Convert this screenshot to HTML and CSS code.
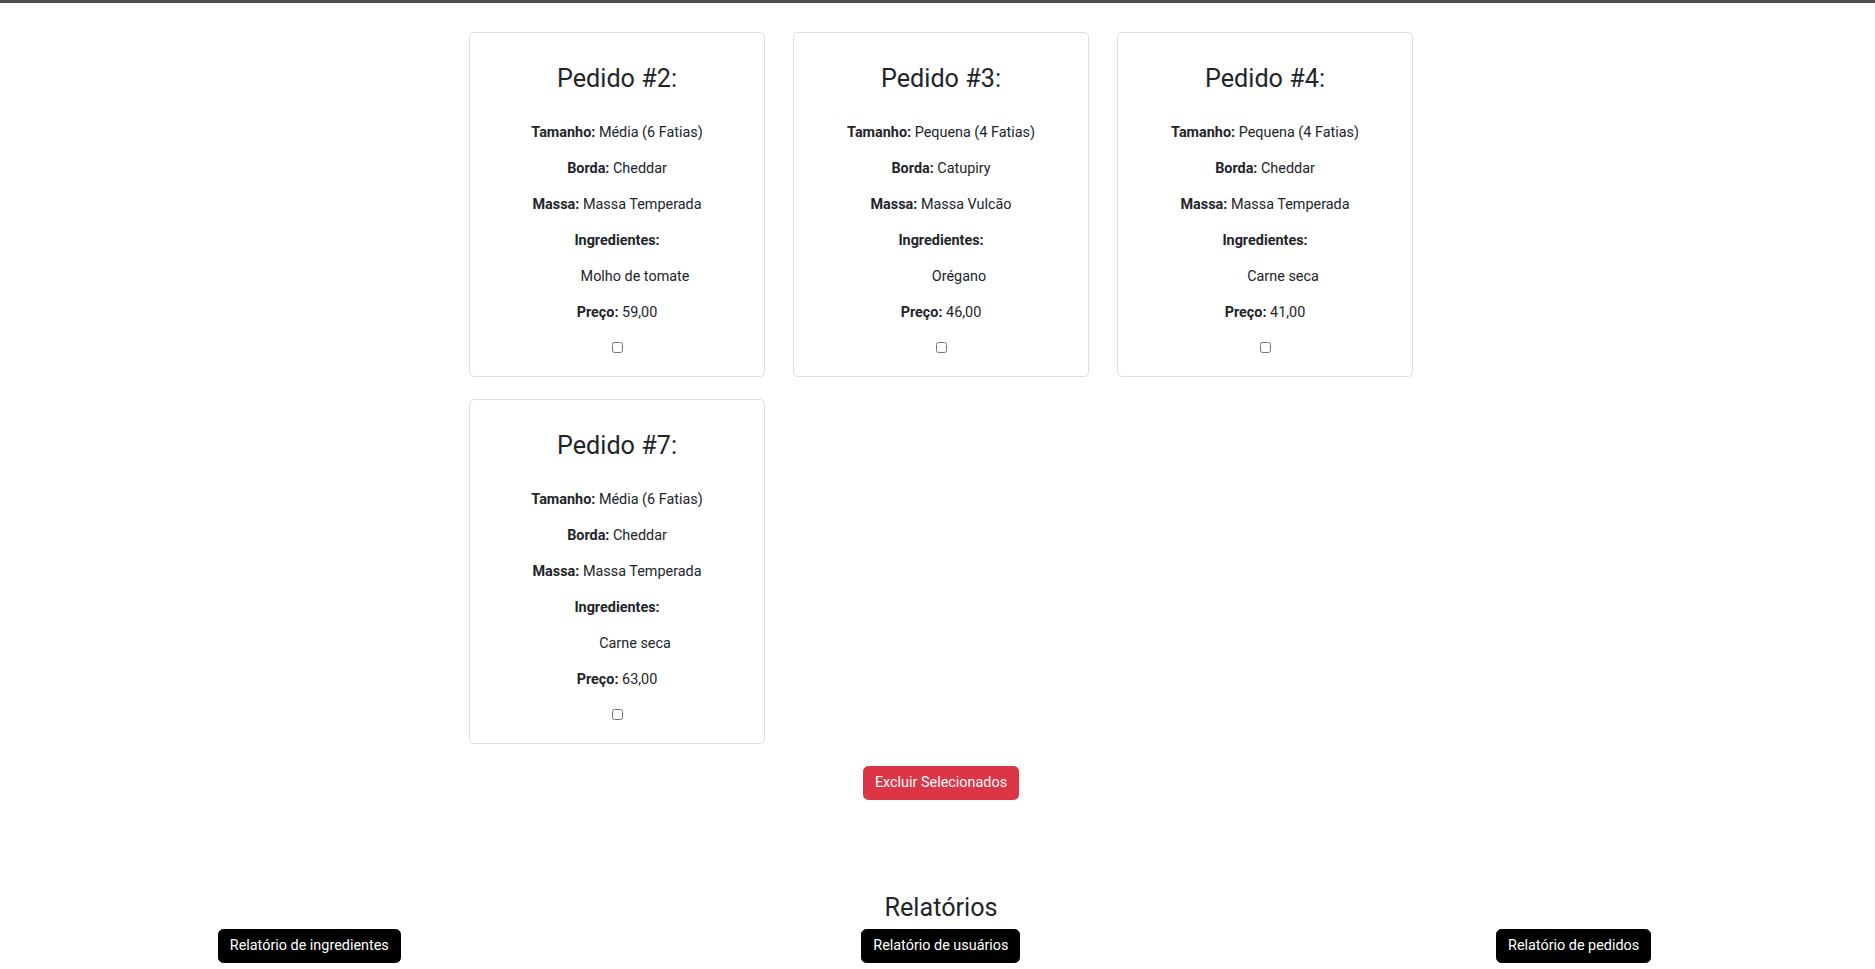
FILE: index.html
```html
<!DOCTYPE html>
<html lang="pt-BR">
<head>
<meta charset="utf-8">
<title>Pedidos</title>
<link rel="stylesheet" href="styles.css">
</head>
<body>
<div class="topbar"></div>
<main class="page">
  <form class="orders">
    <div class="grid">
      <div class="card">
        <h3 class="card-title">Pedido #2:</h3>
        <p><strong>Tamanho:</strong> Média (6 Fatias)</p>
        <p><strong>Borda:</strong> Cheddar</p>
        <p><strong>Massa:</strong> Massa Temperada</p>
        <p><strong>Ingredientes:</strong></p>
        <ul class="ingredients"><li>Molho de tomate</li></ul>
        <p><strong>Preço:</strong> 59,00</p>
        <div class="check"><input type="checkbox" name="pedido" value="2"></div>
      </div>
      <div class="card">
        <h3 class="card-title">Pedido #3:</h3>
        <p><strong>Tamanho:</strong> Pequena (4 Fatias)</p>
        <p><strong>Borda:</strong> Catupiry</p>
        <p><strong>Massa:</strong> Massa Vulcão</p>
        <p><strong>Ingredientes:</strong></p>
        <ul class="ingredients"><li>Orégano</li></ul>
        <p><strong>Preço:</strong> 46,00</p>
        <div class="check"><input type="checkbox" name="pedido" value="3"></div>
      </div>
      <div class="card">
        <h3 class="card-title">Pedido #4:</h3>
        <p><strong>Tamanho:</strong> Pequena (4 Fatias)</p>
        <p><strong>Borda:</strong> Cheddar</p>
        <p><strong>Massa:</strong> Massa Temperada</p>
        <p><strong>Ingredientes:</strong></p>
        <ul class="ingredients"><li>Carne seca</li></ul>
        <p><strong>Preço:</strong> 41,00</p>
        <div class="check"><input type="checkbox" name="pedido" value="4"></div>
      </div>
      <div class="card">
        <h3 class="card-title">Pedido #7:</h3>
        <p><strong>Tamanho:</strong> Média (6 Fatias)</p>
        <p><strong>Borda:</strong> Cheddar</p>
        <p><strong>Massa:</strong> Massa Temperada</p>
        <p><strong>Ingredientes:</strong></p>
        <ul class="ingredients"><li>Carne seca</li></ul>
        <p><strong>Preço:</strong> 63,00</p>
        <div class="check"><input type="checkbox" name="pedido" value="7"></div>
      </div>
    </div>
    <div class="actions">
      <button type="button" class="btn btn-danger">Excluir Selecionados</button>
    </div>
  </form>

  <section class="reports">
    <h3 class="reports-title">Relatórios</h3>
    <div class="reports-row">
      <button type="button" class="btn btn-black">Relatório de ingredientes</button>
      <button type="button" class="btn btn-black btn-mid">Relatório de usuários</button>
      <button type="button" class="btn btn-black">Relatório de pedidos</button>
    </div>
  </section>
</main>
</body>
</html>
```

FILE: styles.css
```css
* { box-sizing: border-box; }

html, body {
  margin: 0;
  padding: 0;
  background: #fff;
}

body {
  font-family: Roboto, "Noto Sans", "Liberation Sans", sans-serif;
  font-size: 14.4px;
  line-height: 1.5;
  color: #212529;
}

.topbar {
  height: 3px;
  background: #4f4f56;
}

.page {
  padding-left: 7px;
  padding-bottom: 6px;
}

.orders {
  margin: 29px 0 0;
}

.grid {
  display: grid;
  grid-template-columns: repeat(3, 296px);
  gap: 22px 28px;
  width: 944px;
  margin: 0 auto;
}

.card {
  border: 1px solid #dedede;
  border-radius: 5px;
  padding: 31px 16px 22px;
  text-align: center;
  height: 345px;
}

.card-title {
  font-size: 25.2px;
  font-weight: 400;
  line-height: 1.2;
  margin: 0 0 28px;
}

.card p {
  margin: 0 0 14.4px;
}

.card strong {
  font-weight: 700;
}

.ingredients {
  list-style: none;
  margin: 0 0 14.4px;
  padding-left: 36px;
}

.check {
  display: flex;
  justify-content: center;
  margin-top: 18.4px;
  height: 11px;
}

.check input {
  width: 11px;
  height: 11px;
  margin: 0;
}

.actions {
  display: flex;
  justify-content: center;
  margin-top: 22px;
}

.btn {
  font-family: inherit;
  font-size: 14.4px;
  line-height: 1.5;
  padding: 5.4px 10.8px;
  border: 1px solid transparent;
  border-radius: 5.4px;
  color: #fff;
  cursor: pointer;
}

.btn-danger {
  background: #dc3545;
  border-color: #dc3545;
}

.btn-black {
  background: #000;
  border-color: #000;
}

.reports {
  margin-top: 93px;
}

.reports-title {
  font-size: 25.2px;
  font-weight: 400;
  line-height: 1.2;
  text-align: center;
  margin: 0 0 5px;
}

.reports-row {
  display: flex;
  justify-content: space-between;
  padding: 0 224px 0 211px;
}

.btn-mid {
  margin-right: 15px;
}
```
